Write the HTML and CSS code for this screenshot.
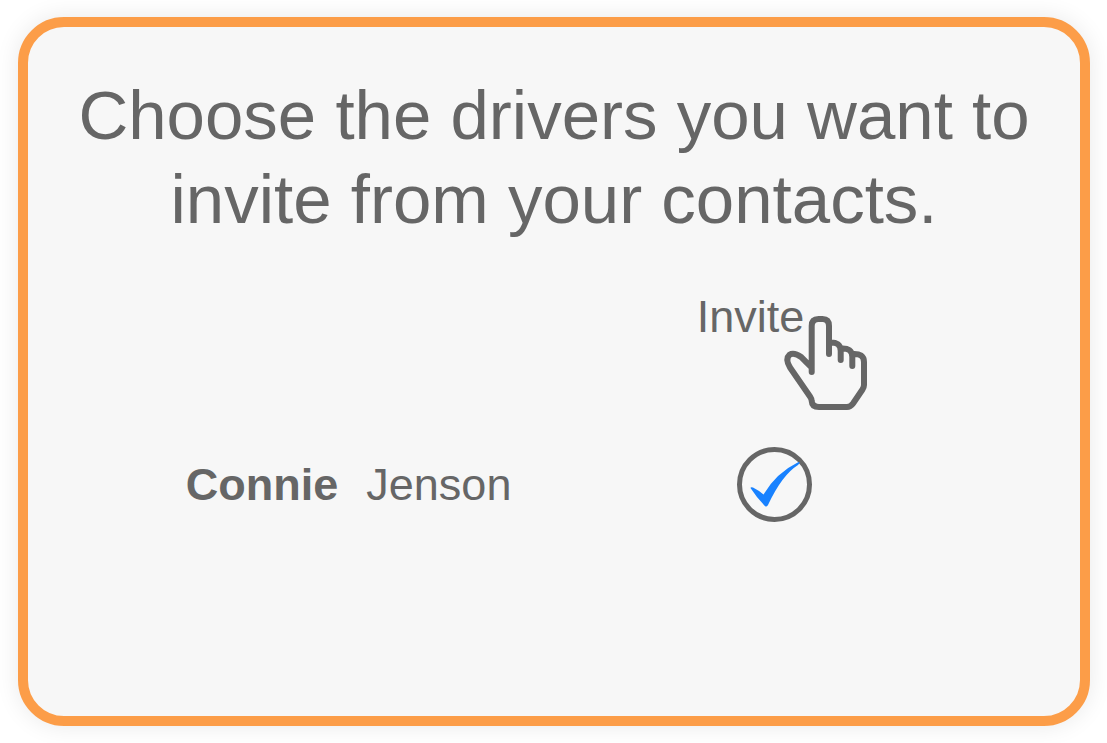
FILE: index.html
```html
<!DOCTYPE html>
<html lang="en">
<head>
<meta charset="utf-8">
<meta name="viewport" content="width=device-width, initial-scale=1">
<title>Invite drivers</title>
<link rel="stylesheet" href="styles.css">
</head>
<body>
<main class="card">
  <h1 class="title">Choose the drivers you want to invite from your contacts.</h1>
  <div class="contacts">
    <div class="invite-cell">
      <button class="invite" type="button">Invite</button>
      <svg class="hand" viewBox="0 0 84 96" aria-hidden="true">
        <path d="M28.700 57V11Q28.700 4 35.500 4H39.500Q46 4 46 11V39M46 27.500Q57.700 26.500 57.700 36V45M57.700 33.500Q69.300 32.500 69.300 42V51M69.300 39Q81 38 81 47V70Q81 72 79.500 74.500L70 88.500Q67.500 92 64 92H36Q29 92 28.700 86Q28.700 84 27 81.500L7 52.500Q2 44 6.500 39.800Q11 37 18.500 42.300L28.500 52.300"/>
      </svg>
    </div>
    <label class="name" for="connie"><strong>Connie</strong><span>Jenson</span></label>
    <div class="tick">
      <input class="tick-box" type="checkbox" id="connie" checked>
      <svg class="tick-mark" viewBox="0 0 75 75" aria-hidden="true">
        <path d="M13.500 41Q13.500 40 16 40.500Q22 43.500 26.500 47.500Q39 26 61.500 15Q64 15.500 61 18Q45 28 31 58Q29 61 27 58Q20 51 13.500 41Z"/>
      </svg>
    </div>
  </div>
</main>
</body>
</html>
```

FILE: styles.css
```css
* {
  box-sizing: border-box;
}

body {
  display: flex;
  min-height: 100vh;
  margin: 0;
  padding: 17px 17px 17px 18px;
  background: #fff;
  color: #666;
  font-family: "Liberation Sans", Arial, sans-serif;
}

.card {
  flex: 1;
  padding: 47px 0;
  border: 10px solid #fc9d48;
  border-radius: 46px;
  background: #f7f7f7;
  box-shadow: 0 0 24px rgba(0, 0, 0, 0.09);
}

.title {
  margin: 0 0 48px;
  padding: 0 40px;
  font-size: 69px;
  font-weight: 400;
  line-height: 84px;
  text-align: center;
}

.contacts {
  display: grid;
  grid-template-columns: 4fr 3fr;
  row-gap: 103px;
  align-items: center;
  padding-left: 15%;
  font-size: 45px;
  line-height: 54px;
}

.invite-cell {
  position: relative;
  grid-column: 2;
  display: flex;
}

.invite {
  padding: 0;
  border: 0;
  background: none;
  color: inherit;
  font: inherit;
  cursor: pointer;
}

.hand {
  position: absolute;
  top: 25px;
  left: 86px;
  width: 84px;
  height: 96px;
  overflow: visible;
  fill: none;
  stroke: #666;
  stroke-width: 6;
  stroke-linecap: round;
  stroke-linejoin: round;
  pointer-events: none;
}

.name {
  display: flex;
  gap: 28px;
}

.tick {
  position: relative;
  width: 75px;
  height: 75px;
  margin-left: 40px;
}

.tick-box {
  display: block;
  width: 100%;
  height: 100%;
  margin: 0;
  appearance: none;
  border: 5px solid #666;
  border-radius: 50%;
}

.tick-mark {
  position: absolute;
  inset: 0;
  display: none;
  fill: #1982ff;
  pointer-events: none;
}

.tick-box:checked + .tick-mark {
  display: block;
}
```
